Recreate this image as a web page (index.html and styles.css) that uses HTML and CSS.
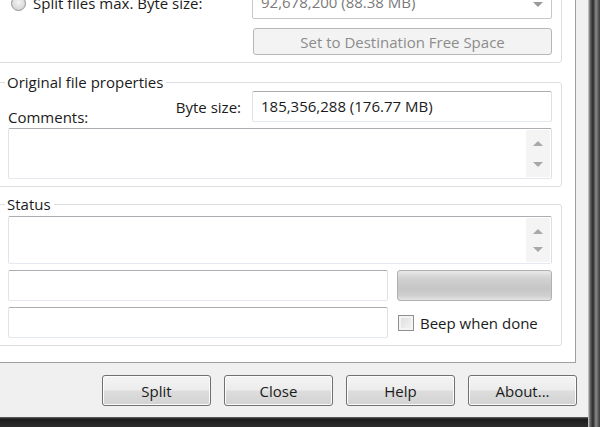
FILE: index.html
```html
<!DOCTYPE html>
<html lang="en">
<head>
    <meta charset="UTF-8">
    <title>File Splitter</title>
    <link rel="stylesheet" href="styles.css">
</head>
<body>
    <div class="window">
        <div class="dialog">
            <div class="page">
                <!-- Split options group (top is scrolled out of view) -->
                <div class="group split-group">
                    <div class="split-row">
                        <label class="radio-label"><span class="radio"></span>Split files max. Byte size:</label>
                        <div class="combo">
                            <span>92,678,200 (88.38 MB)</span>
                            <span class="combo-arrow"></span>
                        </div>
                    </div>
                    <div class="button-row">
                        <button class="btn btn-wide" disabled>Set to Destination Free Space</button>
                    </div>
                </div>

                <!-- Original file properties -->
                <fieldset class="group props-group">
                    <legend>Original file properties</legend>
                    <div class="props-row">
                        <span class="comments-label">Comments:</span>
                        <div class="size-field">
                            <span class="size-label">Byte size:</span>
                            <div class="field field-size">185,356,288 (176.77 MB)</div>
                        </div>
                    </div>
                    <div class="field memo memo-comments">
                        <div class="scrollbar"><span class="arrow-up"></span><span class="arrow-down"></span></div>
                    </div>
                </fieldset>

                <!-- Status -->
                <fieldset class="group status-group">
                    <legend>Status</legend>
                    <div class="field memo memo-status">
                        <div class="scrollbar"><span class="arrow-up"></span><span class="arrow-down"></span></div>
                    </div>
                    <div class="status-row">
                        <div class="field field-line"></div>
                        <div class="progress"></div>
                    </div>
                    <div class="status-row">
                        <div class="field field-line"></div>
                        <label class="check-label"><span class="checkbox"></span>Beep when done</label>
                    </div>
                </fieldset>
            </div>

            <div class="buttons">
                <button class="btn">Split</button>
                <button class="btn">Close</button>
                <button class="btn">Help</button>
                <button class="btn">About...</button>
            </div>
        </div>
    </div>
</body>
</html>
```

FILE: styles.css
```css
* {
    margin: 0;
    padding: 0;
    box-sizing: border-box;
}

body {
    font-family: "Open Sans", "Noto Sans", sans-serif;
    font-size: 15px;
    color: #1b1b1b;
    background: #222;
}

.window {
    width: 600px;
    height: 427px;
    overflow: hidden;
    padding: 0 12px 10px 0;
    background:
        linear-gradient(to right, transparent 588px, #d8d8d8 588px, #6a6a6a 590px, #2a2a2a 593px, #8a8a8a 596px, #3a3a3a 600px),
        linear-gradient(to bottom, #6a6a6a 417px, #1c1c1c 419px, #2e2e2e 427px);
}

.dialog {
    width: 588px;
    height: 417px;
    background: #f0f0f0;
    display: flex;
    flex-direction: column;
}

.page {
    width: 576px;
    height: 363px;
    background: #fff;
    border-right: 1px solid #a0a0a0;
    border-bottom: 1px solid #a0a0a0;
    overflow: hidden;
}

/* Group boxes */
.group {
    width: 568px;
    margin-left: -6px;
    border: 1px solid #dcdfe2;
    border-radius: 3px;
    padding: 0 9px 7px 13px;
}

.group legend {
    margin-left: -3px;
    padding: 0 3px 0 2px;
    line-height: 18px;
}

.split-group {
    margin-top: -30px;
    height: 93px;
    padding-top: 15px;
}

.split-row {
    display: flex;
    justify-content: space-between;
    align-items: flex-end;
    height: 33px;
}

.radio-label {
    display: flex;
    align-items: center;
    gap: 7px;
    margin-left: 3px;
    margin-bottom: 6px;
}

.radio {
    width: 15px;
    height: 15px;
    border-radius: 50%;
    border: 1px solid #8f9498;
    background: radial-gradient(circle at 50% 40%, #f4f4f4 0, #dcdcdc 60%, #cfcfcf 100%);
}

.combo {
    width: 300px;
    height: 33px;
    border: 1px solid #c6c8cc;
    border-radius: 2px;
    display: flex;
    justify-content: space-between;
    align-items: center;
    padding: 0 8px 2px 8px;
    color: #7a7a7a;
}

.combo-arrow {
    width: 0;
    height: 0;
    border-left: 5px solid transparent;
    border-right: 5px solid transparent;
    border-top: 5px solid #9a9a9a;
    margin-top: 6px;
}

.button-row {
    display: flex;
    justify-content: flex-end;
    margin-top: 9px;
}

/* Buttons */
.btn {
    font-family: inherit;
    font-size: 15px;
    color: #1b1b1b;
    width: 109px;
    height: 31px;
    border: 1px solid #707070;
    border-radius: 3px;
    background: linear-gradient(to bottom, #f4f4f4 0, #ececec 48%, #dddddd 52%, #d2d2d2 100%);
    box-shadow: inset 0 0 0 1px #fcfcfc;
}

.btn:disabled {
    color: #8c8c8c;
    border-color: #b5b8bb;
    background: #f3f3f3;
    box-shadow: none;
}

.btn-wide {
    width: 299px;
    height: 27px;
}

/* Text fields */
.field {
    background: #fff;
    border: 1px solid;
    border-color: #abadb3 #dbdfe6 #e3e9ef #e2e3ea;
    border-radius: 2px;
}

.props-group {
    margin-top: 10px;
}

.props-row {
    display: flex;
    justify-content: space-between;
}

.comments-label {
    padding-top: 17px;
    line-height: 18px;
}

.size-field {
    display: flex;
    align-items: center;
    gap: 11px;
    height: 31px;
}

.field-size {
    width: 300px;
    height: 31px;
    line-height: 29px;
    padding-left: 8px;
}

.memo {
    display: flex;
    justify-content: flex-end;
    padding: 1px;
}

.memo-comments {
    height: 51px;
    margin-top: 2px;
}

.scrollbar {
    width: 24px;
    background: #f4f4f4;
    display: flex;
    flex-direction: column;
    justify-content: space-between;
    align-items: center;
    padding: 11px 0 10px;
}

.arrow-up,
.arrow-down {
    width: 0;
    height: 0;
    border-left: 5px solid transparent;
    border-right: 5px solid transparent;
}

.arrow-up {
    border-bottom: 5px solid #a8a8a8;
}

.arrow-down {
    border-top: 5px solid #a8a8a8;
}

.status-group {
    margin-top: 8px;
    padding-top: 3px;
}

.memo-status {
    height: 48px;
}

.status-row {
    display: flex;
    align-items: center;
    gap: 9px;
    margin-top: 6px;
}

.field-line {
    width: 380px;
    height: 31px;
}

.progress {
    width: 155px;
    height: 31px;
    border: 1px solid #b0b0b0;
    border-radius: 3px;
    background: linear-gradient(to bottom, #e9e9e9 0, #d2d2d2 25%, #c6c6c6 60%, #cfcfcf 85%, #e4e4e4 100%);
}

.check-label {
    display: flex;
    align-items: center;
    gap: 6px;
    margin-left: 1px;
}

.checkbox {
    width: 16px;
    height: 16px;
    border: 1px solid #8f8f8f;
    background: linear-gradient(135deg, #dcdcdc, #f6f6f6);
    box-shadow: inset 0 0 0 2px #f4f4f4;
}

/* Bottom buttons */
.buttons {
    display: flex;
    justify-content: flex-end;
    gap: 13px;
    padding: 12px 11px 0 0;
}
```
